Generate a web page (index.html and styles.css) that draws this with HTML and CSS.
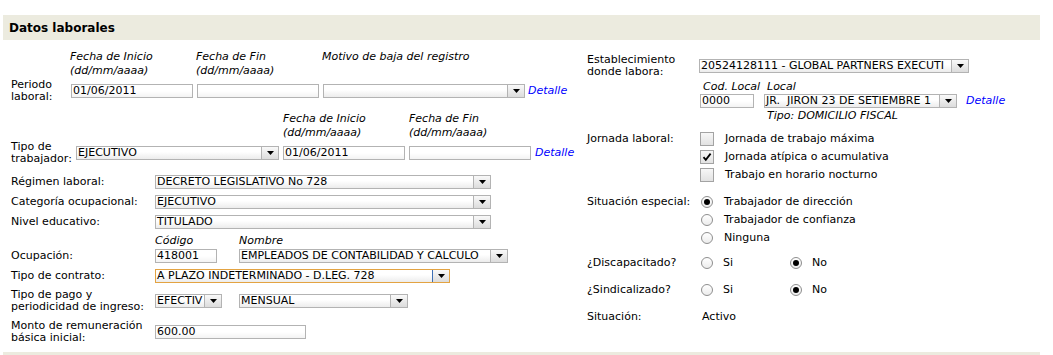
FILE: index.html
```html
<!DOCTYPE html>
<html lang="es">
<head>
<meta charset="utf-8">
<title>Datos laborales</title>
<link rel="stylesheet" href="styles.css">
</head>
<body>
<div class="band"><h2>Datos laborales</h2></div>
<div class="cols">
  <div class="left">
    <div class="hdr hdr-a">
      <div class="hc hc-126">Fecha de Inicio<br>(dd/mm/aaaa)</div>
      <div class="hc hc-126">Fecha de Fin<br>(dd/mm/aaaa)</div>
      <div class="hc hc-motivo">Motivo de baja del registro</div>
    </div>
    <div class="row row-a">
      <div class="lbl lw-60">Periodo<br>laboral:</div>
      <div class="inp w-122">01/06/2011</div>
      <div class="inp w-122 ml-4"></div>
      <div class="sel w-202 ml-4"><span class="v"></span><span class="b"><svg width="7" height="4" viewBox="0 0 7 4"><path d="M0 0h7L3.5 4z" fill="#000"/></svg></span></div>
      <a class="det ml-3">Detalle</a>
    </div>

    <div class="hdr hdr-b">
      <div class="hc hc-126">Fecha de Inicio<br>(dd/mm/aaaa)</div>
      <div class="hc hc-126">Fecha de Fin<br>(dd/mm/aaaa)</div>
    </div>
    <div class="row row-b">
      <div class="lbl lw-65">Tipo de<br>trabajador:</div>
      <div class="sel w-203"><span class="v">EJECUTIVO</span><span class="b"><svg width="7" height="4" viewBox="0 0 7 4"><path d="M0 0h7L3.5 4z" fill="#000"/></svg></span></div>
      <div class="inp w-122 ml-4">01/06/2011</div>
      <div class="inp w-122 ml-4"></div>
      <a class="det ml-4">Detalle</a>
    </div>

    <div class="row row-one row-c">
      <div class="lbl lw-144">Régimen laboral:</div>
      <div class="sel w-336"><span class="v">DECRETO LEGISLATIVO No 728</span><span class="b"><svg width="7" height="4" viewBox="0 0 7 4"><path d="M0 0h7L3.5 4z" fill="#000"/></svg></span></div>
    </div>
    <div class="row row-one row-d">
      <div class="lbl lw-144">Categoría ocupacional:</div>
      <div class="sel w-336"><span class="v">EJECUTIVO</span><span class="b"><svg width="7" height="4" viewBox="0 0 7 4"><path d="M0 0h7L3.5 4z" fill="#000"/></svg></span></div>
    </div>
    <div class="row row-one row-d">
      <div class="lbl lw-144">Nivel educativo:</div>
      <div class="sel w-336"><span class="v">TITULADO</span><span class="b"><svg width="7" height="4" viewBox="0 0 7 4"><path d="M0 0h7L3.5 4z" fill="#000"/></svg></span></div>
    </div>

    <div class="hdr hdr-f">
      <div class="hc hc-84">Código</div>
      <div class="hc">Nombre</div>
    </div>
    <div class="row row-f">
      <div class="lbl lw-144">Ocupación:</div>
      <div class="inp w-62">418001</div>
      <div class="sel w-269 ml-22"><span class="v">EMPLEADOS DE CONTABILIDAD Y CALCULO</span><span class="b"><svg width="7" height="4" viewBox="0 0 7 4"><path d="M0 0h7L3.5 4z" fill="#000"/></svg></span></div>
    </div>
    <div class="row row-g">
      <div class="lbl lw-144">Tipo de contrato:</div>
      <div class="sel sel-focus w-295"><span class="v">A PLAZO INDETERMINADO - D.LEG. 728</span><span class="b"><svg width="7" height="4" viewBox="0 0 7 4"><path d="M0 0h7L3.5 4z" fill="#000"/></svg></span></div>
    </div>
    <div class="row row-h">
      <div class="lbl lw-144">Tipo de pago y<br>periodicidad de ingreso:</div>
      <div class="sel w-67"><span class="v">EFECTIV</span><span class="b"><svg width="7" height="4" viewBox="0 0 7 4"><path d="M0 0h7L3.5 4z" fill="#000"/></svg></span></div>
      <div class="sel w-169 ml-17"><span class="v">MENSUAL</span><span class="b"><svg width="7" height="4" viewBox="0 0 7 4"><path d="M0 0h7L3.5 4z" fill="#000"/></svg></span></div>
    </div>
    <div class="row row-i">
      <div class="lbl lw-144">Monto de remuneración<br>básica inicial:</div>
      <div class="inp w-151">600.00</div>
    </div>
  </div>

  <div class="right">
    <div class="row row-r1">
      <div class="lbl lw-112">Establecimiento<br>donde labora:</div>
      <div class="sel w-270"><span class="v">20524128111 - GLOBAL PARTNERS EXECUTI</span><span class="b"><svg width="7" height="4" viewBox="0 0 7 4"><path d="M0 0h7L3.5 4z" fill="#000"/></svg></span></div>
    </div>
    <div class="hdr hdr-r2">
      <div class="hc hc-64">Cod. Local</div>
      <div class="hc">Local</div>
    </div>
    <div class="row row-r2">
      <div class="inp w-54">0000</div>
      <div class="sel w-193 ml-10"><span class="v">JR.&nbsp; JIRON 23 DE SETIEMBRE 1</span><span class="b"><svg width="7" height="4" viewBox="0 0 7 4"><path d="M0 0h7L3.5 4z" fill="#000"/></svg></span></div>
      <a class="det ml-9">Detalle</a>
    </div>
    <div class="tipo">Tipo: DOMICILIO FISCAL</div>

    <div class="grp grp-jornada">
      <div class="lbl lw-113 glbl">Jornada laboral:</div>
      <div class="opts">
        <div class="opt"><span class="chk"></span><span class="ot">Jornada de trabajo máxima</span></div>
        <div class="opt"><span class="chk"><svg width="10" height="10" viewBox="0 0 10 10"><path d="M1.5 5.2L3.8 7.8L8.6 1.6" fill="none" stroke="#000" stroke-width="1.8"/></svg></span><span class="ot">Jornada atípica o acumulativa</span></div>
        <div class="opt"><span class="chk"></span><span class="ot">Trabajo en horario nocturno</span></div>
      </div>
    </div>

    <div class="grp grp-sit">
      <div class="lbl lw-114 glbl">Situación especial:</div>
      <div class="opts">
        <div class="opt"><span class="rad on"></span><span class="ot">Trabajador de dirección</span></div>
        <div class="opt"><span class="rad"></span><span class="ot">Trabajador de confianza</span></div>
        <div class="opt"><span class="rad"></span><span class="ot">Ninguna</span></div>
      </div>
    </div>

    <div class="row yn yn-1">
      <div class="lbl lw-114">¿Discapacitado?</div>
      <span class="rad"></span><span class="yt yt-si">Si</span>
      <span class="rad on"></span><span class="yt">No</span>
    </div>
    <div class="row yn yn-2">
      <div class="lbl lw-114">¿Sindicalizado?</div>
      <span class="rad"></span><span class="yt yt-si">Si</span>
      <span class="rad on"></span><span class="yt">No</span>
    </div>
    <div class="row yn yn-2">
      <div class="lbl lw-115">Situación:</div>
      <span class="yt">Activo</span>
    </div>
  </div>
</div>
<div class="band-bottom"></div>
</body>
</html>
```

FILE: styles.css
```css
* { box-sizing: border-box; }
body {
  margin: 0;
  font-family: "DejaVu Sans", Verdana, sans-serif;
  font-size: 11px;
  color: #000;
  background: #fff;
}
.band {
  margin: 15px 0 0 3px;
  width: 1037px;
  height: 25px;
  background: #ecebdf;
  display: flex;
  align-items: center;
  padding-left: 6px;
}
.band h2 { margin: 0; font-size: 12px; font-weight: bold; color: #000; }
.band-bottom {
  margin: 8px 0 0 3px;
  width: 1037px;
  height: 6px;
  background: #ecebdf;
}
.cols { display: flex; }
.left { width: 587px; flex: none; padding-left: 11px; }
.right { flex: 1; }

.hdr { display: flex; font-style: italic; line-height: 14px; }
.hc { flex: none; }
.hc-126 { width: 126px; }
.hc-84 { width: 84px; }
.hc-64 { width: 64px; }
.hdr-a { margin: 10px 0 0 59px; }
.hdr-b { margin: 9px 0 0 272px; }
.hdr-f { margin: 6px 0 0 144px; line-height: 12px; }
.hdr-r2 { margin: 3px 0 0 116px; line-height: 12px; }

.row { display: flex; align-items: center; }
.lbl { line-height: 12px; flex: none; }
.lw-60 { width: 60px; }
.lw-65 { width: 65px; }
.lw-112 { width: 112px; }
.lw-113 { width: 113px; }
.lw-114 { width: 114px; }
.lw-115 { width: 115px; }
.lw-144 { width: 144px; }

.row-a { margin-top: 1px; }
.row-b { margin-top: 1px; }
.row-one { height: 14px; }
.row-c { margin-top: 10px; }
.row-d { margin-top: 6px; }
.row-f { margin-top: 2px; }
.row-g { margin-top: 6px; }
.row-h { margin-top: 6px; }
.row-i { margin-top: 7px; }

.row-r1 { margin-top: 14px; }
.row-r2 { margin: 1px 0 0 113px; }
.tipo { margin: 2px 0 0 180px; font-style: italic; line-height: 12px; }

.inp {
  flex: none;
  height: 14px;
  border: 1px solid #b3b3b3;
  background: linear-gradient(#ffffff 50%, #f3f3f3);
  line-height: 12px;
  padding-left: 1px;
  white-space: nowrap;
  overflow: hidden;
}
.sel {
  flex: none;
  display: flex;
  height: 14px;
  border: 1px solid #b3b3b3;
  background: linear-gradient(#ffffff 40%, #ececec);
}
.sel .v {
  flex: 1;
  min-width: 0;
  overflow: hidden;
  white-space: nowrap;
  line-height: 12px;
  padding-left: 1px;
}
.sel .b {
  flex: none;
  width: 17px;
  border-left: 1px solid #b3b3b3;
  background: linear-gradient(#f9f9f9, #dcdcdc);
  display: flex;
  align-items: center;
  justify-content: center;
}
.sel-focus { border-color: #e3a342; }
.sel-focus .b { border-left-color: #3d6fb5; }

.w-54 { width: 54px; }
.w-62 { width: 62px; }
.w-67 { width: 67px; }
.w-122 { width: 122px; }
.w-151 { width: 151px; }
.w-169 { width: 169px; }
.w-193 { width: 193px; }
.w-202 { width: 202px; }
.w-203 { width: 203px; }
.w-269 { width: 269px; }
.w-270 { width: 270px; }
.w-295 { width: 295px; }
.w-336 { width: 336px; }
.ml-3 { margin-left: 3px; }
.ml-4 { margin-left: 4px; }
.ml-9 { margin-left: 9px; }
.ml-10 { margin-left: 10px; }
.ml-17 { margin-left: 17px; }
.ml-22 { margin-left: 22px; }

.det { color: #0000ff; font-style: italic; text-decoration: none; line-height: 12px; }

.grp { display: flex; align-items: flex-start; }
.grp-jornada { margin-top: 10px; }
.grp-sit { margin-top: 13px; }
.glbl { line-height: 14px; }
.opts { display: flex; flex-direction: column; gap: 4px; }
.opt { display: flex; align-items: center; height: 14px; }
.ot { line-height: 14px; }
.chk {
  width: 14px; height: 14px;
  border: 1px solid #a3a3a3;
  background: linear-gradient(#f7f7f7, #e2e2e2);
  display: flex; align-items: center; justify-content: center;
  margin-right: 11px;
  flex: none;
}
.rad {
  width: 12px; height: 12px;
  border: 1px solid #8e8e8e;
  border-radius: 50%;
  background: linear-gradient(#ffffff, #ececec);
  display: flex; align-items: center; justify-content: center;
  flex: none;
}
.grp-sit .rad { margin-right: 11px; }
.rad.on::after {
  content: "";
  width: 6px; height: 6px; border-radius: 50%;
  background: #000;
}
.yn { height: 14px; }
.yn-1 { margin-top: 11px; }
.yn-2 { margin-top: 13px; }
.yt { line-height: 14px; }
.yn .rad { margin-right: 10px; }
.yt-si { width: 67px; }
```
